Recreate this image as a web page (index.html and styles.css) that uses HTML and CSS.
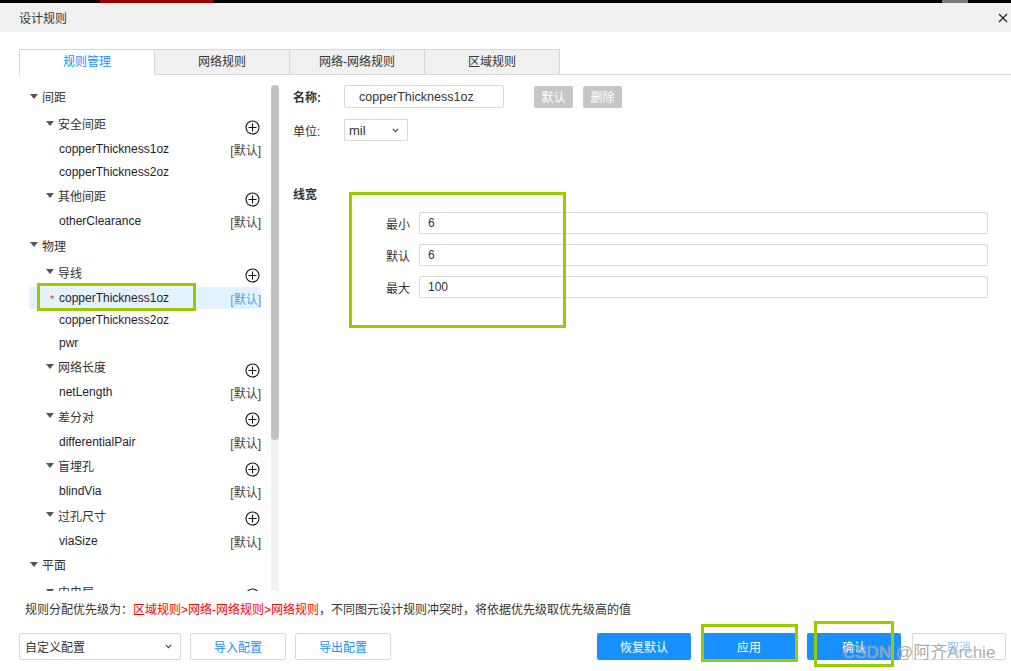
FILE: index.html
```html
<!DOCTYPE html>
<html lang="zh">
<head>
<meta charset="utf-8">
<title>设计规则</title>
<link rel="stylesheet" href="styles.css">
</head>
<body>
<div class="topstrip"></div>
<div class="dialog">
  <div class="titlebar">
    <span class="title">设计规则</span>
    <svg class="close" width="10" height="10" viewBox="0 0 10 10"><path d="M1 1L9 9M9 1L1 9" stroke="#222" stroke-width="1.2" fill="none"/></svg>
  </div>

  <div class="tabs">
    <div class="tab active">规则管理</div>
    <div class="tab">网络规则</div>
    <div class="tab">网络-网络规则</div>
    <div class="tab">区域规则</div>
  </div>

  <div class="content">
    <div class="tree-wrap">
      <div class="tree">
        <div class="node l0"><span class="tri"></span><span class="t">间距</span></div>
        <div class="node l1"><span class="tri"></span><span class="t">安全间距</span><svg class="plus" width="15" height="15" viewBox="0 0 15 15"><circle cx="7.5" cy="7.5" r="6.5" fill="none" stroke="#111" stroke-width="1.1"/><path d="M7.5 3.5V11.5M3.5 7.5H11.5" stroke="#111" stroke-width="1.1"/></svg></div>
        <div class="leaf"><span class="t">copperThickness1oz</span><span class="def">[默认]</span></div>
        <div class="leaf"><span class="t">copperThickness2oz</span></div>
        <div class="node l1"><span class="tri"></span><span class="t">其他间距</span><svg class="plus" width="15" height="15" viewBox="0 0 15 15"><circle cx="7.5" cy="7.5" r="6.5" fill="none" stroke="#111" stroke-width="1.1"/><path d="M7.5 3.5V11.5M3.5 7.5H11.5" stroke="#111" stroke-width="1.1"/></svg></div>
        <div class="leaf"><span class="t">otherClearance</span><span class="def">[默认]</span></div>
        <div class="node l0"><span class="tri"></span><span class="t">物理</span></div>
        <div class="node l1"><span class="tri"></span><span class="t">导线</span><svg class="plus" width="15" height="15" viewBox="0 0 15 15"><circle cx="7.5" cy="7.5" r="6.5" fill="none" stroke="#111" stroke-width="1.1"/><path d="M7.5 3.5V11.5M3.5 7.5H11.5" stroke="#111" stroke-width="1.1"/></svg></div>
        <div class="leaf sel"><span class="star">*</span><span class="t">copperThickness1oz</span><span class="def">[默认]</span></div>
        <div class="leaf"><span class="t">copperThickness2oz</span></div>
        <div class="leaf"><span class="t">pwr</span></div>
        <div class="node l1"><span class="tri"></span><span class="t">网络长度</span><svg class="plus" width="15" height="15" viewBox="0 0 15 15"><circle cx="7.5" cy="7.5" r="6.5" fill="none" stroke="#111" stroke-width="1.1"/><path d="M7.5 3.5V11.5M3.5 7.5H11.5" stroke="#111" stroke-width="1.1"/></svg></div>
        <div class="leaf"><span class="t">netLength</span><span class="def">[默认]</span></div>
        <div class="node l1"><span class="tri"></span><span class="t">差分对</span><svg class="plus" width="15" height="15" viewBox="0 0 15 15"><circle cx="7.5" cy="7.5" r="6.5" fill="none" stroke="#111" stroke-width="1.1"/><path d="M7.5 3.5V11.5M3.5 7.5H11.5" stroke="#111" stroke-width="1.1"/></svg></div>
        <div class="leaf"><span class="t">differentialPair</span><span class="def">[默认]</span></div>
        <div class="node l1"><span class="tri"></span><span class="t">盲埋孔</span><svg class="plus" width="15" height="15" viewBox="0 0 15 15"><circle cx="7.5" cy="7.5" r="6.5" fill="none" stroke="#111" stroke-width="1.1"/><path d="M7.5 3.5V11.5M3.5 7.5H11.5" stroke="#111" stroke-width="1.1"/></svg></div>
        <div class="leaf"><span class="t">blindVia</span><span class="def">[默认]</span></div>
        <div class="node l1"><span class="tri"></span><span class="t">过孔尺寸</span><svg class="plus" width="15" height="15" viewBox="0 0 15 15"><circle cx="7.5" cy="7.5" r="6.5" fill="none" stroke="#111" stroke-width="1.1"/><path d="M7.5 3.5V11.5M3.5 7.5H11.5" stroke="#111" stroke-width="1.1"/></svg></div>
        <div class="leaf"><span class="t">viaSize</span><span class="def">[默认]</span></div>
        <div class="node l0"><span class="tri"></span><span class="t">平面</span></div>
        <div class="node l1"><span class="tri"></span><span class="t">内电层</span><svg class="plus" width="15" height="15" viewBox="0 0 15 15"><circle cx="7.5" cy="7.5" r="6.5" fill="none" stroke="#111" stroke-width="1.1"/><path d="M7.5 3.5V11.5M3.5 7.5H11.5" stroke="#111" stroke-width="1.1"/></svg></div>
      </div>
      <div class="scrollbar"><div class="thumb"></div></div>
    </div>

    <div class="form">
      <div class="frow">
        <span class="flabel bold">名称:</span>
        <div class="name-input">copperThickness1oz</div>
        <div class="gbtn first">默认</div>
        <div class="gbtn">删除</div>
      </div>
      <div class="frow unit">
        <span class="flabel">单位:</span>
        <div class="unit-select"><span>mil</span><svg width="7" height="5" viewBox="0 0 7 5"><path d="M0.8 0.8L3.5 3.6L6.2 0.8" stroke="#444" stroke-width="1.1" fill="none"/></svg></div>
      </div>
      <div class="section-title">线宽</div>
      <div class="fields">
        <div class="field"><span class="field-label">最小</span><div class="field-input">6</div></div>
        <div class="field"><span class="field-label">默认</span><div class="field-input">6</div></div>
        <div class="field"><span class="field-label">最大</span><div class="field-input">100</div></div>
      </div>
    </div>
  </div>

  <div class="priority">规则分配优先级为：<span class="red">区域规则&gt;网络-网络规则&gt;网络规则</span>，不同图元设计规则冲突时，将依据优先级取优先级高的值</div>

  <div class="footer">
    <div class="cfg-select"><span>自定义配置</span><svg width="7" height="5" viewBox="0 0 7 5"><path d="M0.8 0.8L3.5 3.6L6.2 0.8" stroke="#444" stroke-width="1.1" fill="none"/></svg></div>
    <div class="wbtn">导入配置</div>
    <div class="wbtn">导出配置</div>
    <div class="spacer"></div>
    <div class="bbtn">恢复默认</div>
    <div class="bbtn">应用</div>
    <div class="bbtn">确认</div>
    <div class="wbtn cancel">取消</div>
  </div>

  <div class="mark mark-row"></div>
  <div class="mark mark-fields"></div>
  <div class="mark mark-apply"></div>
  <div class="mark mark-ok"></div>
  <div class="watermark">CSDN @阿齐Archie</div>
</div>
</body>
</html>
```

FILE: styles.css
```css
* { box-sizing: border-box; }

body {
  margin: 0;
  width: 1011px;
  height: 671px;
  overflow: hidden;
  background: #fff;
  font-family: "Liberation Sans", "Noto Sans CJK SC", sans-serif;
  font-size: 12px;
  color: #333;
}

.topstrip {
  height: 3px;
  background: linear-gradient(to right, #000 100px, #9a0000 100px, #9a0000 213px, #000 213px, #000 942px, #7a7a7a 942px, #7a7a7a 968px, #000 968px);
}

.dialog {
  position: relative;
  height: 668px;
  display: flex;
  flex-direction: column;
}

.titlebar {
  height: 29px;
  background: #f0f0f0;
  display: flex;
  align-items: center;
  justify-content: space-between;
  padding: 0 3px 0 19px;
}
.title { font-size: 12px; color: #333; }

.tabs {
  display: flex;
  margin: 17px 0 0 19px;
  border-bottom: 1px solid #d9d9d9;
  height: 26px;
}
.tab {
  width: 136px;
  height: 25px;
  border: 1px solid #d5d5d5;
  border-bottom: none;
  margin-left: -1px;
  background: #f0f0f0;
  text-align: center;
  line-height: 24px;
  color: #333;
}
.tab:first-child { margin-left: 0; }
.tab.active {
  background: #fff;
  color: #1890ff;
  height: 26px;
}

.content {
  display: flex;
  height: 516px;
}

.tree-wrap {
  width: 261px;
  margin-left: 19px;
  display: flex;
  flex: none;
}
.tree {
  width: 252px;
  height: 516px;
  overflow: hidden;
  padding: 9px 0 0 10px;
  flex: none;
}
.node {
  width: 232px;
  height: 27px;
  display: flex;
  align-items: center;
  color: #333;
}
.node .t { margin-top: -2px; }
.l0 { padding-left: 1px; }
.l1 { padding-left: 17px; }
.tri {
  width: 0;
  height: 0;
  border-left: 4.5px solid transparent;
  border-right: 4.5px solid transparent;
  border-top: 5px solid #555;
  margin-right: 4px;
  margin-top: -3px;
}
.plus { margin-left: auto; margin-top: 5px; margin-right: 1px; }

.leaf {
  width: 232px;
  height: 22.5px;
  display: flex;
  align-items: center;
  padding-left: 30px;
  color: #1e1e2e;
}
.leaf .def {
  margin-left: auto;
  color: #444;
  margin-top: 1px;
}
.leaf.sel {
  background: #e4f2fd;
  padding-left: 21px;
}
.leaf.sel .def { color: #4a9ff5; }
.star {
  width: 9px;
  color: #e33;
  font-size: 11px;
  margin-top: 2px;
}

.scrollbar {
  width: 8px;
  margin-top: 10px;
  height: 506px;
  background: #f1f1f1;
  flex: none;
}
.thumb {
  height: 355px;
  background: #c1c1c1;
  border-radius: 4px;
}

.form {
  flex: 1;
  margin-left: 13px;
  padding: 10px 23px 0 0;
}
.frow {
  display: flex;
  align-items: center;
  height: 23px;
}
.frow.unit { margin-top: 11px; height: 22px; }
.flabel { width: 51px; color: #333; }
.bold { font-weight: bold; }
.name-input {
  width: 160px;
  height: 23px;
  border: 1px solid #d9d9d9;
  border-radius: 2px;
  padding-left: 14px;
  display: flex;
  align-items: center;
  font-size: 12.5px;
  color: #333;
}
.gbtn {
  width: 39px;
  height: 22px;
  background: #c6c6c6;
  color: #fff;
  border-radius: 2px;
  display: flex;
  align-items: center;
  justify-content: center;
  margin-left: 10px;
}
.gbtn.first { margin-left: 30px; }
.unit-select {
  width: 64px;
  height: 22px;
  border: 1px solid #d9d9d9;
  border-radius: 2px;
  display: flex;
  align-items: center;
  justify-content: space-between;
  padding: 0 8px 0 4px;
  font-size: 13px;
  color: #333;
}

.section-title {
  margin-top: 47px;
  font-weight: bold;
  line-height: 14px;
  color: #333;
}
.fields {
  margin-top: 10px;
  display: flex;
  flex-direction: column;
  gap: 10px;
}
.field {
  display: flex;
  align-items: center;
  height: 22px;
}
.field-label {
  width: 117px;
  text-align: right;
  margin-right: 9px;
  color: #333;
}
.field-input {
  flex: 1;
  height: 22px;
  border: 1px solid #d9d9d9;
  border-radius: 2px;
  padding-left: 8px;
  display: flex;
  align-items: center;
  color: #333;
}

.priority {
  margin: 11px 0 0 25px;
  line-height: 16px;
  height: 16px;
  color: #333;
}
.red { color: #f00; }

.footer {
  margin-top: 15px;
  height: 27px;
  display: flex;
  align-items: center;
  padding: 0 5px 0 19px;
}
.cfg-select {
  width: 162px;
  height: 27px;
  border: 1px solid #d9d9d9;
  border-radius: 2px;
  display: flex;
  align-items: center;
  justify-content: space-between;
  padding: 0 8px 0 5px;
  color: #333;
}
.wbtn {
  width: 96px;
  height: 27px;
  border: 1px solid #d9d9d9;
  border-radius: 2px;
  display: flex;
  align-items: center;
  justify-content: center;
  color: #1890ff;
  margin-left: 9px;
}
.spacer { flex: 1; }
.bbtn {
  width: 94px;
  height: 27px;
  background: #1890ff;
  color: #fff;
  border-radius: 2px;
  display: flex;
  align-items: center;
  justify-content: center;
  margin-left: 11px;
}
.bbtn:first-of-type { margin-left: 0; }
.wbtn.cancel { width: 94px; margin-left: 11px; color: #8cc4f8; }

.mark {
  position: absolute;
  border: 3px solid #99cc00;
}
.mark-row { left: 37px; top: 280px; width: 159px; height: 28px; }
.mark-fields { left: 349px; top: 189px; width: 217px; height: 136px; }
.mark-apply { left: 701px; top: 621px; width: 97px; height: 38px; }
.mark-ok { left: 814px; top: 618px; width: 80px; height: 46px; }

.watermark {
  position: absolute;
  left: 843px;
  top: 640px;
  font-size: 17px;
  line-height: 20px;
  color: rgba(150, 150, 150, 0.8);
  text-shadow: 0 0 1px rgba(255, 255, 255, 0.6);
  white-space: nowrap;
}
```
